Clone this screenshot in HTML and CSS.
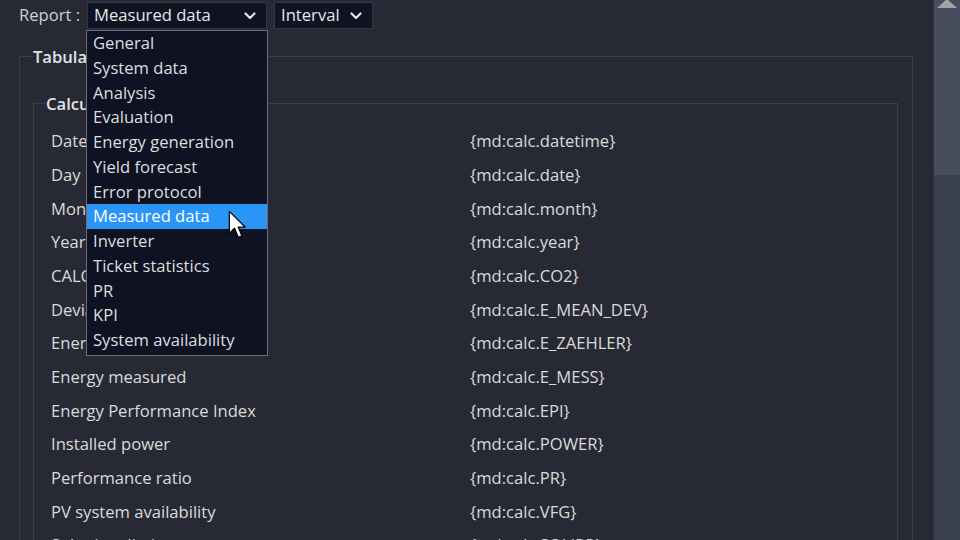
FILE: index.html
```html
<!DOCTYPE html>
<html>
<head>
<meta charset="utf-8">
<link rel="stylesheet" href="styles.css">
</head>
<body>
<div class="page">
  <main class="main">
    <div class="toolbar">
      <span class="lbl">Report :</span>
      <div class="select wide"><span>Measured data</span><svg class="chev" viewBox="0 0 12 8" width="12" height="8"><path d="M1.5 1.5 L6 6 L10.5 1.5" fill="none" stroke="#e6e6e6" stroke-width="2.2" stroke-linecap="round" stroke-linejoin="round"/></svg></div>
      <div class="select"><span>Interval</span><svg class="chev" viewBox="0 0 12 8" width="12" height="8"><path d="M1.5 1.5 L6 6 L10.5 1.5" fill="none" stroke="#e6e6e6" stroke-width="2.2" stroke-linecap="round" stroke-linejoin="round"/></svg></div>
    </div>
    <fieldset class="outer">
      <legend>Tabular</legend>
      <fieldset class="inner">
        <legend>Calculated values</legend>
        <div class="rows">
          <div class="row"><span>Date/Time</span><span>{md:calc.datetime}</span></div>
          <div class="row"><span>Day</span><span>{md:calc.date}</span></div>
          <div class="row"><span>Month</span><span>{md:calc.month}</span></div>
          <div class="row"><span>Year</span><span>{md:calc.year}</span></div>
          <div class="row"><span>CALC CO2</span><span>{md:calc.CO2}</span></div>
          <div class="row"><span>Deviation from mean</span><span>{md:calc.E_MEAN_DEV}</span></div>
          <div class="row"><span>Energy meter</span><span>{md:calc.E_ZAEHLER}</span></div>
          <div class="row"><span>Energy measured</span><span>{md:calc.E_MESS}</span></div>
          <div class="row"><span>Energy Performance Index</span><span>{md:calc.EPI}</span></div>
          <div class="row"><span>Installed power</span><span>{md:calc.POWER}</span></div>
          <div class="row"><span>Performance ratio</span><span>{md:calc.PR}</span></div>
          <div class="row"><span>PV system availability</span><span>{md:calc.VFG}</span></div>
          <div class="row"><span>Solar irradiation</span><span>{md:calc.SOLIRR}</span></div>
        </div>
      </fieldset>
    </fieldset>
    <ul class="dropdown">
      <li>General</li>
      <li>System data</li>
      <li>Analysis</li>
      <li>Evaluation</li>
      <li>Energy generation</li>
      <li>Yield forecast</li>
      <li>Error protocol</li>
      <li class="active">Measured data</li>
      <li>Inverter</li>
      <li>Ticket statistics</li>
      <li>PR</li>
      <li>KPI</li>
      <li>System availability</li>
    </ul>
    <svg class="cursor" viewBox="0 0 14 22" width="19" height="30"><path d="M1 1 L1 17 L4.8 13.4 L7.6 20 L10.2 18.9 L7.5 12.5 L12.6 12.5 Z" fill="#ffffff" stroke="#000000" stroke-width="0.9" stroke-linejoin="round"/></svg>
  </main>
  <div class="scrollbar">
    <div class="arrow"></div>
    <div class="thumb"></div>
  </div>
</div>
</body>
</html>
```
FILE: styles.css
```css
html, body {
  margin: 0;
  padding: 0;
  height: 100%;
  overflow: hidden;
}
body {
  background: #272a35;
  color: #dcdcdc;
  font-family: "Open Sans", "Noto Sans", sans-serif;
  font-size: 16.6px;
}
.page {
  display: flex;
  height: 540px;
}
.main {
  flex: 1;
  position: relative;
  padding-left: 19px;
  padding-right: 20px;
}
.toolbar {
  display: flex;
  align-items: center;
  height: 27px;
  margin-top: 2px;
  margin-bottom: 1px;
  gap: 7px;
}
.lbl {
  color: #cfd0d4;
  margin-top: -2px;
}
.select {
  display: flex;
  align-items: center;
  justify-content: space-between;
  height: 27px;
  box-sizing: border-box;
  background: #0f1322;
  border: 1px solid #323747;
  padding: 0 10px 2px 6px;
  gap: 10px;
  color: #e8e8e8;
}
.select.wide {
  width: 180px;
}
.select .chev {
  margin-top: 2px;
}
.chev {
  display: block;
}
fieldset {
  margin: 0;
  border: 1px solid #3a3e4b;
  min-width: 0;
}
legend {
  font-weight: 600;
  color: #e4e4e4;
  padding: 0;
}
.outer {
  margin-top: 16px;
  padding: 0 14px 40px 13px;
}
.inner {
  margin-top: 24px;
  padding: 0 0 40px 12px;
}
.rows {
  padding-top: 9px;
  padding-left: 5px;
}
.row {
  display: grid;
  grid-template-columns: 419px 1fr;
  height: 33.67px;
  align-items: center;
  white-space: nowrap;
  color: #dadada;
}
.dropdown {
  position: absolute;
  left: 86px;
  top: 30px;
  width: 182px;
  box-sizing: border-box;
  margin: 0;
  padding: 0 0 2px;
  list-style: none;
  background: #0e1223;
  border: 1px solid #6b6e76;
}
.dropdown li {
  height: 24.75px;
  line-height: 24px;
  padding-left: 6px;
  color: #dedede;
  white-space: nowrap;
}
.dropdown li.active {
  background: #2b95f6;
  color: #ffffff;
}
.cursor {
  position: absolute;
  left: 228px;
  top: 210px;
}
.scrollbar {
  width: 26px;
  background: #3a3f4e;
  border-left: 1px solid #30343f;
  display: flex;
  flex-direction: column;
  position: relative;
}
.thumb {
  height: 175px;
  background: #474d5d;
}
.arrow {
  position: absolute;
  left: 3px;
  top: 0;
  width: 0;
  height: 0;
  border-left: 10px solid transparent;
  border-right: 10px solid transparent;
  border-bottom: 9px solid #a3a3a6;
  margin-top: -1px;
}
```
